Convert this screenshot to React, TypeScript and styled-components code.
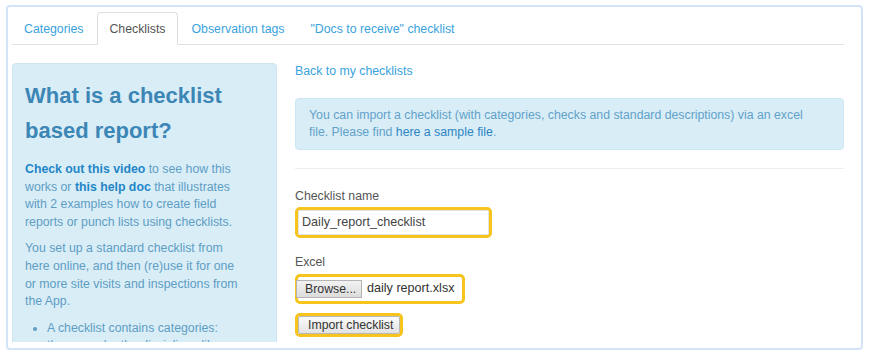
import styled, { createGlobalStyle } from "styled-components";

const GlobalStyle = createGlobalStyle`
  body {
    margin: 0;
    background: #ffffff;
    font-family: "Liberation Sans", Arial, sans-serif;
    font-size: 12.3px;
    line-height: 17.6px;
  }
`;

const Frame = styled.div`
  box-sizing: border-box;
  margin: 5px 0 0 6px;
  width: 857px;
  height: 345px;
  border: 2px solid #d3e4f8;
  border-radius: 4px;
  padding: 5px 17px 6px 4px;
  display: flex;
  flex-direction: column;
`;

const TabBar = styled.div`
  display: flex;
  border-bottom: 1px solid #e1e1e1;
  height: 32px;
`;

const Tab = styled.div<{ active?: boolean }>`
  box-sizing: border-box;
  height: 33px;
  padding: 8px 11px 0;
  margin-right: 2px;
  border: 1px solid ${(p) => (p.active ? "#dedede" : "transparent")};
  border-bottom-color: ${(p) => (p.active ? "#ffffff" : "transparent")};
  border-radius: 4px 4px 0 0;
  background: ${(p) => (p.active ? "#ffffff" : "transparent")};
  color: ${(p) => (p.active ? "#555555" : "#3aa3dd")};
`;

const Body = styled.div`
  flex: 1;
  overflow: hidden;
  display: flex;
  align-items: flex-start;
  gap: 18px;
  padding-top: 18px;
`;

const Sidebar = styled.div`
  box-sizing: border-box;
  width: 265px;
  flex: none;
  background: #d9edf7;
  border: 1px solid #cde5f1;
  border-radius: 4px;
  padding: 14px 32px 14px 12px;
  color: #5e9dc4;
`;

const Heading = styled.h2`
  margin: 0 0 13px;
  font-size: 22px;
  line-height: 35px;
  font-weight: bold;
  color: #3c86b6;
`;

const Para = styled.p`
  margin: 0 0 9px;
`;

const Strong = styled.a`
  font-weight: bold;
  color: #1f86c7;
  text-decoration: none;
`;

const List = styled.ul`
  margin: 0;
  padding-left: 22px;
`;

const Main = styled.div`
  flex: 1;
`;

const BackLink = styled.a`
  display: block;
  color: #3aa3dd;
  text-decoration: none;
  margin-bottom: 17px;
`;

const Alert = styled.div`
  background: #d9edf7;
  border: 1px solid #cbe6f2;
  border-radius: 4px;
  padding: 8px 20px 7px 13px;
  color: #62a2c9;
`;

const AlertLink = styled.a`
  color: #2c85c2;
  text-decoration: none;
`;

const Rule = styled.hr`
  border: none;
  border-top: 1px solid #eeeeee;
  margin: 18px 0 19px;
`;

const Label = styled.div`
  color: #555555;
  margin-bottom: 2px;
`;

const Highlight = styled.div<{ w: number; h: number; gap: number }>`
  box-sizing: border-box;
  width: ${(p) => p.w}px;
  height: ${(p) => p.h}px;
  border: 3px solid #f6c41c;
  border-radius: 5px;
  display: flex;
  align-items: center;
  margin-bottom: ${(p) => p.gap}px;
`;

const TextBox = styled.div`
  box-sizing: border-box;
  flex: 1;
  align-self: stretch;
  border: 1px solid #e3e3e3;
  border-radius: 2px;
  padding: 0 3px;
  display: flex;
  align-items: center;
  color: #444444;
  font-size: 12.6px;
`;

const FileButton = styled.div`
  box-sizing: border-box;
  height: 18px;
  width: 66px;
  margin-left: -2px;
  border: 1px solid #b4b4b4;
  background: linear-gradient(#f2f2f2, #dcdcdc);
  color: #333333;
  line-height: 16px;
  padding-left: 8px;
`;

const FileName = styled.span`
  margin-left: 5px;
  color: #333333;
  font-size: 12.6px;
`;

const Button = styled.div`
  box-sizing: border-box;
  flex: 1;
  align-self: stretch;
  border: 1px solid #b8b8b8;
  border-radius: 2px;
  background: linear-gradient(#fbfbfb, #e2e2e2);
  color: #333333;
  padding-left: 9px;
  line-height: 16px;
`;

export default function App() {
  return (
    <>
      <GlobalStyle />
      <Frame>
        <TabBar>
          <Tab>Categories</Tab>
          <Tab active>Checklists</Tab>
          <Tab>Observation tags</Tab>
          <Tab>"Docs to receive" checklist</Tab>
        </TabBar>
        <Body>
          <Sidebar>
            <Heading>
              What is a checklist
              <br />
              based report?
            </Heading>
            <Para>
              <Strong>Check out this video</Strong> to see how this works or{" "}
              <Strong>this help doc</Strong> that illustrates with 2 examples
              how to create field reports or punch lists using checklists.
            </Para>
            <Para>
              You set up a standard checklist from here online, and then
              (re)use it for one or more site visits and inspections from the
              App.
            </Para>
            <List>
              <li>
                A checklist contains categories: these can be the disciplines
                like structure, electrical, plumbing.
              </li>
              <li>Each category holds checks with standard descriptions.</li>
            </List>
          </Sidebar>
          <Main>
            <BackLink>Back to my checklists</BackLink>
            <Alert>
              You can import a checklist (with categories, checks and standard
              descriptions) via an excel file. Please find{" "}
              <AlertLink>here a sample file</AlertLink>.
            </Alert>
            <Rule />
            <Label>Checklist name</Label>
            <Highlight w={197} h={31} gap={16}>
              <TextBox>Daily_report_checklist</TextBox>
            </Highlight>
            <Label>Excel</Label>
            <Highlight w={170} h={30} gap={9}>
              <FileButton>Browse...</FileButton>
              <FileName>daily report.xlsx</FileName>
            </Highlight>
            <Highlight w={108} h={24} gap={0}>
              <Button>Import checklist</Button>
            </Highlight>
          </Main>
        </Body>
      </Frame>
    </>
  );
}
